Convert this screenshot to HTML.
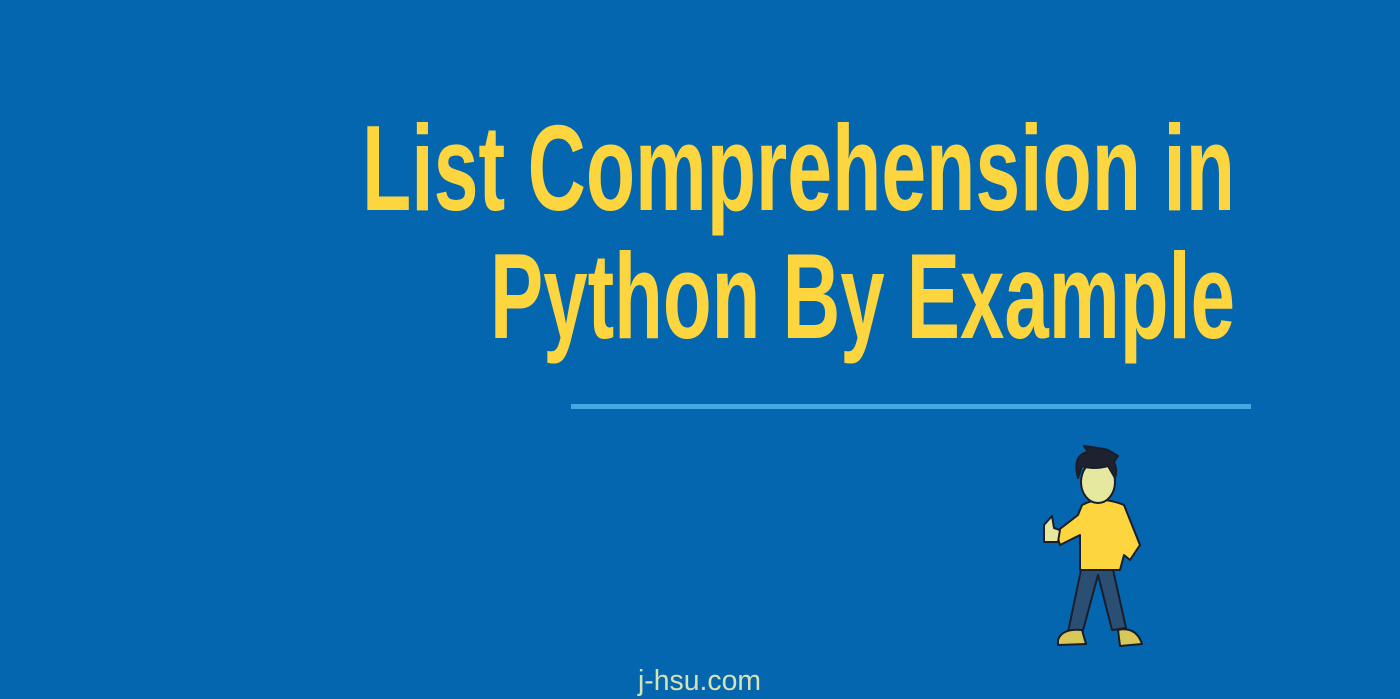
<!DOCTYPE html>
<html><head><meta charset="utf-8"><style>
html,body{margin:0;padding:0;background:#0566b0;width:1400px;height:699px;overflow:hidden}
svg{display:block}
</style></head><body>
<svg width="1400" height="699" viewBox="0 0 1400 699" xmlns="http://www.w3.org/2000/svg">
<rect width="1400" height="699" fill="#0566b0"/>
<text x="362" y="210" font-family="Liberation Sans, sans-serif" font-weight="bold" font-size="122" fill="#fdd63f" textLength="873" lengthAdjust="spacingAndGlyphs">List Comprehension in</text>
<text x="490" y="338" font-family="Liberation Sans, sans-serif" font-weight="bold" font-size="122" fill="#fdd63f" textLength="745" lengthAdjust="spacingAndGlyphs">Python By Example</text>
<rect x="571" y="404" width="680" height="5" fill="#43a9e2"/>
<text x="638" y="690" font-family="Liberation Sans, sans-serif" font-size="29" fill="#d4e2b4" textLength="123" lengthAdjust="spacingAndGlyphs">j-hsu.com</text>
<g stroke="#1a1d2a" stroke-width="2" stroke-linejoin="round">
<path d="M1082 565 L1068 632 L1082 634 L1098 575 L1112 630 L1126 628 L1112 565 Z" fill="#2a4f73"/>
<path d="M1058 640 Q1062 628 1082 630 L1086 644 L1058 645 Z" fill="#d8c85a"/>
<path d="M1118 630 Q1136 626 1142 644 L1120 646 Z" fill="#d8c85a"/>
<path d="M1082 505 Q1100 495 1124 505 L1140 545 L1130 560 L1124 555 L1120 570 L1080 570 L1080 535 L1060 545 L1056 532 L1078 515 Z" fill="#fdd63f"/>
<path d="M1044 525 L1052 516 L1054 528 L1060 530 L1058 542 L1044 542 Z" fill="#e6e8a0"/>
<ellipse cx="1098" cy="482" rx="17" ry="21" fill="#e6e8a0"/>
<path d="M1078 478 Q1072 455 1088 452 L1084 446 Q1100 448 1108 450 L1118 456 L1114 462 Q1118 470 1115 478 L1108 466 Q1094 470 1082 466 Z" fill="#1e2230"/>
</g>
</svg>
</body></html>
